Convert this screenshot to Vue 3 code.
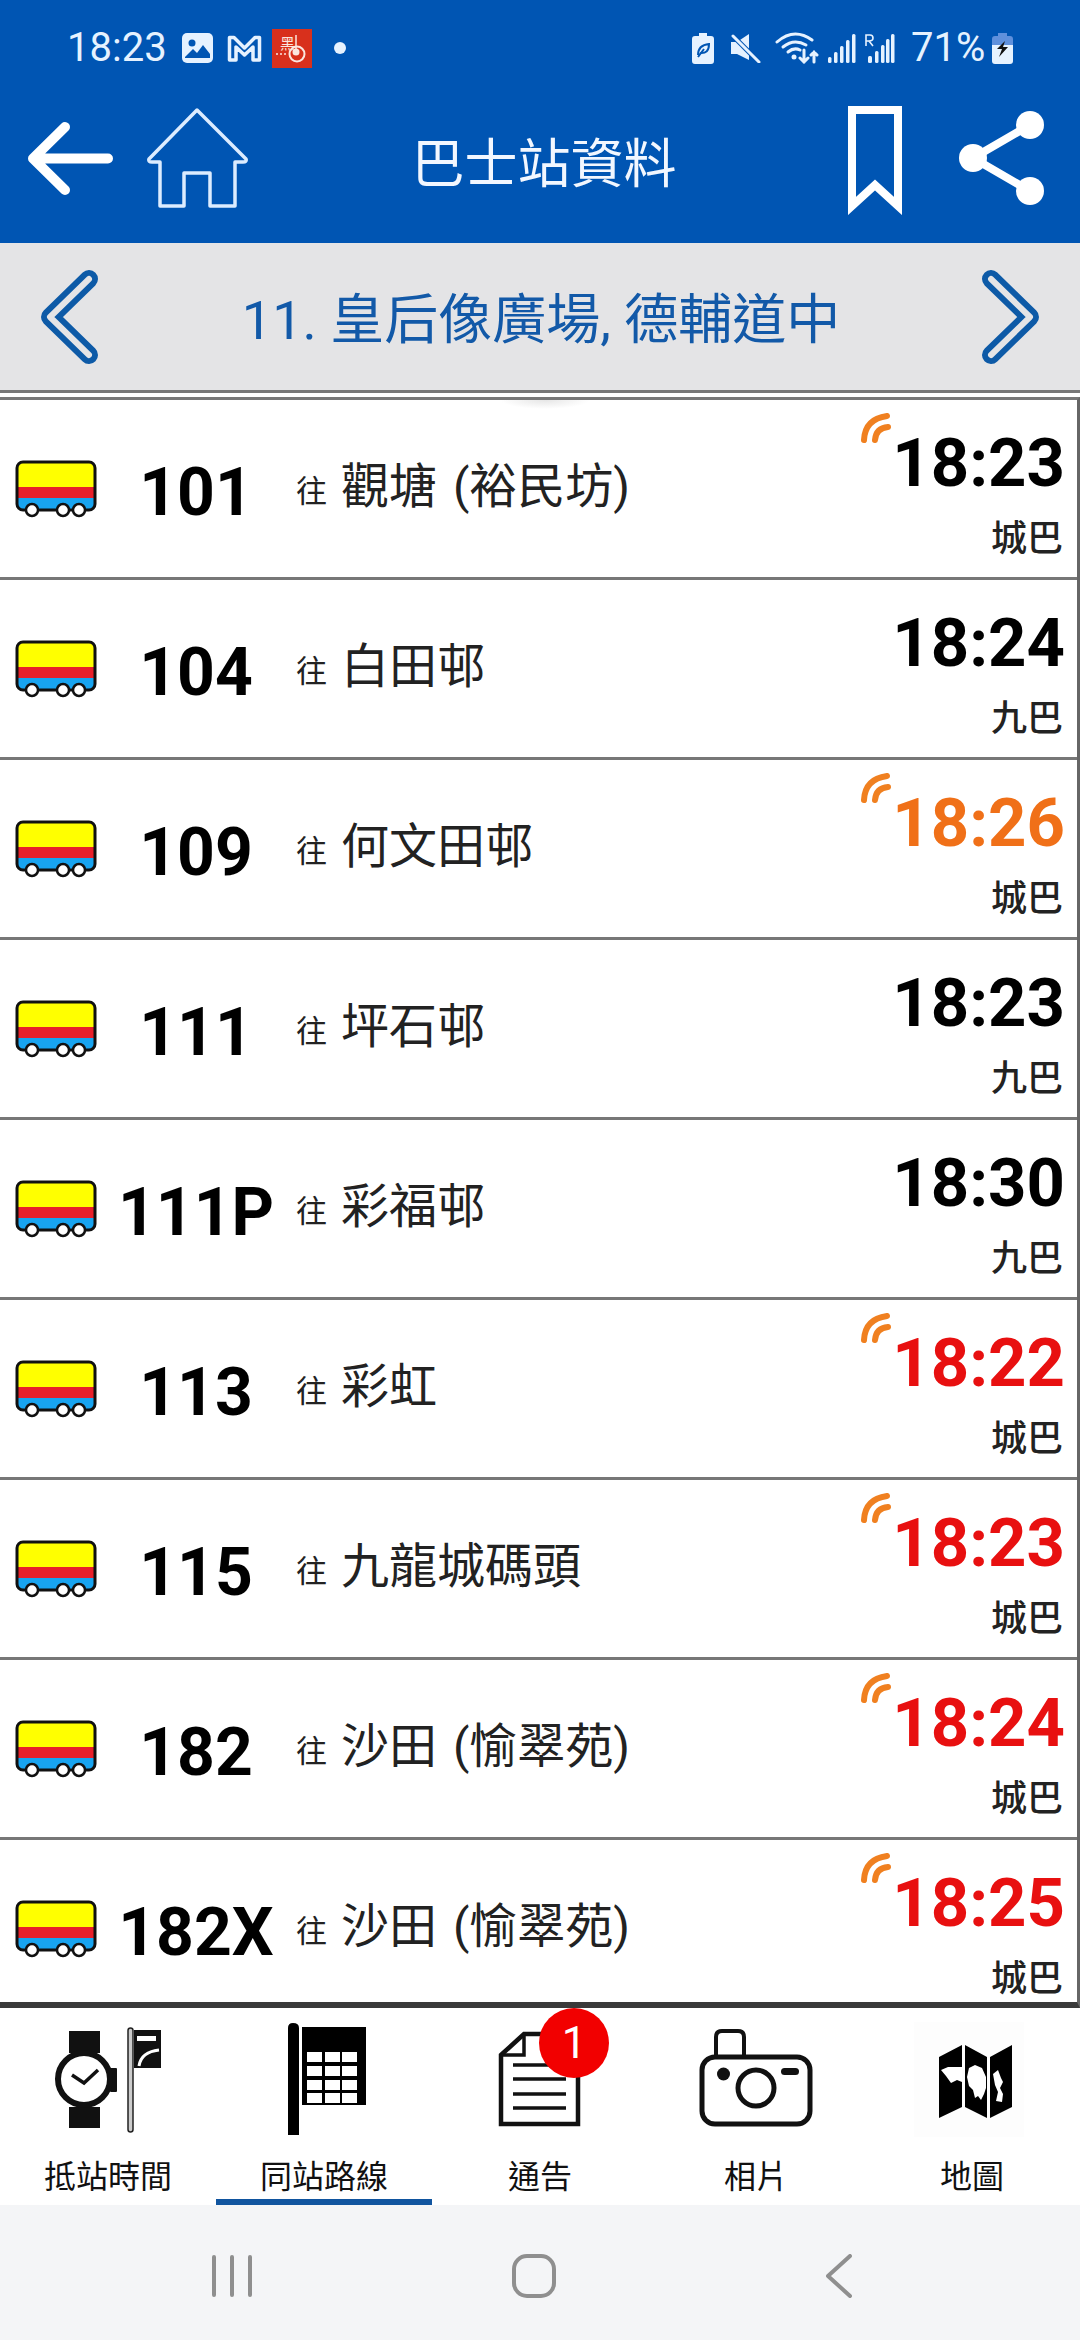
<script setup>
const routes = [
  { no: '101', dest: '觀塘 (裕民坊)', time: '18:23', op: '城巴', live: true, tone: '' },
  { no: '104', dest: '白田邨', time: '18:24', op: '九巴', live: false, tone: '' },
  { no: '109', dest: '何文田邨', time: '18:26', op: '城巴', live: true, tone: 'orange' },
  { no: '111', dest: '坪石邨', time: '18:23', op: '九巴', live: false, tone: '' },
  { no: '111P', dest: '彩福邨', time: '18:30', op: '九巴', live: false, tone: '' },
  { no: '113', dest: '彩虹', time: '18:22', op: '城巴', live: true, tone: 'red' },
  { no: '115', dest: '九龍城碼頭', time: '18:23', op: '城巴', live: true, tone: 'red' },
  { no: '182', dest: '沙田 (愉翠苑)', time: '18:24', op: '城巴', live: true, tone: 'red' },
  { no: '182X', dest: '沙田 (愉翠苑)', time: '18:25', op: '城巴', live: true, tone: 'red' },
];

const cellXs = [43, 61, 78];
const cellYs = [30, 44, 58, 71];
</script>

<template>
  <div class="screen">
    <header class="header">
      <div class="status">
        <span class="clock">18:23</span>
        <svg class="st-gallery" width="31" height="30" viewBox="0 0 31 30">
          <rect width="31" height="30" rx="5" fill="#e6f2ff" />
          <circle cx="10" cy="10" r="3.5" fill="#0055b3" />
          <path d="M3 24 L11 16 L15 20 L21 12 L28 21 V25 H3 Z" fill="#0055b3" />
        </svg>
        <svg class="st-mail" width="35" height="27" viewBox="0 0 35 27">
          <path d="M2.500 25 V2.500 H7 L17.500 13 L28 2.500 H32.500 V25 H26 V12 L17.500 20 L9 12 V25 Z" fill="none" stroke="#e6f2ff" stroke-width="3.500" stroke-linejoin="round" />
        </svg>
        <svg class="st-app" width="40" height="39" viewBox="0 0 40 39">
          <rect width="40" height="39" fill="#d8301c" />
          <text x="8" y="20" font-size="15" fill="#fbe6df" font-family="Noto Sans CJK TC">黑</text>
          <circle cx="25" cy="25" r="7.500" fill="none" stroke="#fbe6df" stroke-width="2" />
          <circle cx="24" cy="23" r="3.500" fill="#fbe6df" />
          <path d="M24 6 V20" stroke="#fbe6df" stroke-width="1.500" />
          <path d="M4 25 H14" stroke="#fbe6df" stroke-width="1.500" stroke-dasharray="2 2" />
        </svg>
        <span class="st-dot"></span>
        <span class="st-right">
          <svg width="22" height="31" viewBox="0 0 22 31">
            <path d="M7 0 H15 V3 H19 Q22 3 22 6 V28 Q22 31 19 31 H3 Q0 31 0 28 V6 Q0 3 3 3 H7 Z" fill="#e6f2ff" />
            <path d="M6 22 Q6 12 17 11 Q17 21 8 20 M6 24 L12 16" fill="none" stroke="#0055b3" stroke-width="2" />
          </svg>
          <svg class="st-mute" width="30" height="29" viewBox="0 0 30 29">
            <path d="M0 8 H6 L18 0 V26 L6 20 H0 Z" fill="#e6f2ff" />
            <path d="M2 2 L28 28" stroke="#0055b3" stroke-width="5" />
            <path d="M2 2 L28 28" stroke="#e6f2ff" stroke-width="3" stroke-linecap="round" />
          </svg>
          <svg class="st-wifi" width="44" height="32" viewBox="0 0 44 32">
            <g fill="none" stroke="#e6f2ff" stroke-width="3" stroke-linecap="round">
              <path d="M2 10 Q19 -5 37 8" />
              <path d="M8 15 Q19 6 31 13" />
              <path d="M13 20 Q19 15 25 18" />
              <path d="M29 18 V30 M25 26 L29 30 L33 26" />
              <path d="M39 30 V20 M36 23 L39 20 L42 23" />
            </g>
            <circle cx="19" cy="25" r="2.500" fill="#e6f2ff" />
          </svg>
          <svg class="st-signal" width="28" height="29" viewBox="0 0 28 29">
            <g fill="#e6f2ff">
              <rect x="0" y="23" width="3.500" height="6" rx="1.500" />
              <rect x="6" y="18" width="3.500" height="11" rx="1.500" />
              <rect x="12" y="12" width="3.500" height="17" rx="1.500" />
              <rect x="18" y="6" width="3.500" height="23" rx="1.500" />
              <rect x="24" y="0" width="3.500" height="29" rx="1.500" />
            </g>
          </svg>
          <svg class="st-signal-r" width="30" height="30" viewBox="0 0 30 30">
            <g fill="#e6f2ff">
              <rect x="3" y="23" width="4" height="7" rx="1.500" />
              <rect x="10" y="18" width="3.500" height="12" rx="1.500" />
              <rect x="16" y="12" width="3.500" height="18" rx="1.500" />
              <rect x="21" y="6" width="3.500" height="24" rx="1.500" />
              <rect x="26" y="1" width="3.500" height="29" rx="1.500" />
              <path d="M1 13 V2 H5 Q8 2 8 5 Q8 8 4 8 L8 13 M1 8 H4" fill="none" stroke="#e6f2ff" stroke-width="1.600" />
            </g>
          </svg>
          <span class="pct">71%</span>
          <svg class="st-batt" width="21" height="31" viewBox="0 0 21 31">
            <path d="M6 0 H15 V3 H18 Q21 3 21 6 V12 H0 V6 Q0 3 3 3 H6 Z" fill="#5f90dc" />
            <path d="M0 12 H21 V28 Q21 31 18 31 H3 Q0 31 0 28 Z" fill="#e6f2ff" />
            <path d="M13 8 L5 16 H10 L7 24 L16 14 H11 Z" fill="#111" />
          </svg>
        </span>
      </div>

      <div class="toolbar">
        <svg class="tb-back" width="85" height="73" viewBox="0 0 85 73">
          <path d="M80 36.500 H6 M37 5 L5 36.500 L37 68" fill="none" stroke="#fff" stroke-width="10" stroke-linecap="round" stroke-linejoin="round" />
        </svg>
        <svg class="tb-home" width="101" height="100" viewBox="0 0 101 100">
          <path d="M50 2 L99 51 Q100 54 96 54 H88 V98 H63 V65 H37 V98 H13 V54 H5 Q1 54 2 51 Z" fill="none" stroke="#dcecff" stroke-width="3.500" stroke-linejoin="round" />
        </svg>
        <h1 class="title">巴士站資料</h1>
        <svg class="tb-mark" width="54" height="109" viewBox="0 0 54 109">
          <path d="M4 4 H50 V100 L27 79 L4 100 Z" fill="none" stroke="#fff" stroke-width="8" />
        </svg>
        <svg class="tb-share" width="85" height="94" viewBox="0 0 85 94">
          <path d="M71 14 L14 47 L71 80" fill="none" stroke="#fff" stroke-width="8" />
          <circle cx="71" cy="14" r="14" fill="#fff" />
          <circle cx="14" cy="47" r="14" fill="#fff" />
          <circle cx="71" cy="80" r="14" fill="#fff" />
        </svg>
      </div>
    </header>

    <div class="stopbar">
      <svg class="chev" width="60" height="94" viewBox="0 0 60 94">
        <path class="chev-o" d="M48 9 L9 47 L48 85" />
        <path class="chev-i" d="M48 9 L9 47 L48 85" />
      </svg>
      <span class="stopname">11. 皇后像廣場, 德輔道中</span>
      <svg class="chev" width="60" height="94" viewBox="0 0 60 94">
        <path class="chev-o" d="M10 9 L49 47 L10 85" />
        <path class="chev-i" d="M10 9 L49 47 L10 85" />
      </svg>
    </div>

    <div class="gap"></div>

    <div class="list">
      <span class="glow"></span>
      <div v-for="r in routes" :key="r.no" class="row">
        <svg class="busicon" width="82" height="58" viewBox="0 0 82 58">
          <rect x="2" y="2" width="78" height="48" rx="6" fill="#ffff00" />
          <rect x="2" y="27" width="78" height="11" fill="#e8202a" />
          <path d="M2 38 H80 V44 Q80 50 74 50 H8 Q2 50 2 44 Z" fill="#18a4f0" />
          <rect x="2" y="2" width="78" height="48" rx="6" fill="none" stroke="#111" stroke-width="3" />
          <circle cx="17" cy="50" r="6" fill="#fff" stroke="#111" stroke-width="2.500" />
          <circle cx="48" cy="50" r="6" fill="#fff" stroke="#111" stroke-width="2.500" />
          <circle cx="64" cy="50" r="6" fill="#fff" stroke="#111" stroke-width="2.500" />
        </svg>
        <span class="routeno">{{ r.no }}</span>
        <span class="to">往</span>
        <span class="dest">{{ r.dest }}</span>
        <div class="eta">
          <svg v-if="r.live" class="live" width="30" height="30" viewBox="0 0 30 30">
            <path d="M3 27 Q4 6 26 3 M14 27 Q15 15 27 14" fill="none" stroke="#f08020" stroke-width="6" stroke-linecap="round" />
          </svg>
          <span class="time" :class="r.tone">{{ r.time }}</span>
          <span class="op">{{ r.op }}</span>
        </div>
      </div>
    </div>

    <nav class="tabs">
      <div class="tab">
        <svg width="120" height="120" viewBox="3 0 120 120">
          <rect x="24" y="9" width="31" height="22" fill="#111" />
          <rect x="24" y="85" width="31" height="21" fill="#111" />
          <rect x="65" y="46" width="7" height="24" rx="1" fill="#111" />
          <circle cx="39" cy="57" r="26" fill="#fff" stroke="#111" stroke-width="6" />
          <path d="M27 53 L39 61 L53 48" fill="none" stroke="#111" stroke-width="3.500" />
          <rect x="83" y="6" width="5" height="104" rx="2.500" fill="#ccc" stroke="#222" stroke-width="1.500" />
          <rect x="89" y="8" width="27" height="38" fill="#111" />
          <rect x="92" y="14" width="19" height="5" fill="#fff" />
          <path d="M94 44 Q96 30 114 28" fill="none" stroke="#fff" stroke-width="3" />
        </svg>
        <span class="tablabel">抵站時間</span>
      </div>
      <div class="tab active">
        <svg width="120" height="120" viewBox="0 0 120 120">
          <path d="M24 113 V6 Q24 1 29 1 Q35 1 35 6 V113 Z" fill="#000" />
          <rect x="38" y="5" width="64" height="78" fill="#000" />
          <template v-for="y in cellYs" :key="y">
            <rect v-for="x in cellXs" :key="x" :x="x" :y="y" width="15" :height="10" fill="#fff" />
          </template>
        </svg>
        <span class="tablabel">同站路線</span>
      </div>
      <div class="tab">
        <div class="iconwrap">
          <svg width="120" height="120" viewBox="0 0 120 120">
            <path d="M21 33 L44 12 H98 V102 H21 Z" fill="#fff" stroke="#111" stroke-width="4.500" />
            <path d="M44 12 V33 H21" fill="none" stroke="#111" stroke-width="3.500" />
            <path d="M33 43 H86 M33 57 H86 M33 72 H86 M33 86 H86" stroke="#111" stroke-width="3.500" />
          </svg>
          <span class="badge">1</span>
        </div>
        <span class="tablabel">通告</span>
      </div>
      <div class="tab">
        <svg width="120" height="120" viewBox="0 0 120 120">
          <rect x="6" y="35" width="108" height="67" rx="13" fill="none" stroke="#111" stroke-width="5" />
          <path d="M20 33 V15 Q20 9 26 9 H42 Q48 9 48 15 V33" fill="none" stroke="#111" stroke-width="4" />
          <circle cx="60" cy="66" r="18" fill="none" stroke="#111" stroke-width="5" />
          <circle cx="27.500" cy="52" r="6.500" fill="#111" />
          <rect x="85" y="46" width="18" height="7" rx="3.500" fill="#111" />
        </svg>
        <span class="tablabel">相片</span>
      </div>
      <div class="tab">
        <svg width="120" height="120" viewBox="0 0 120 120">
          <rect x="2" y="0" width="110" height="115" fill="#fdfdfd" />
          <path d="M27 35 L50 23 V85 L27 96 Z M53 23 L75 35 V96 L53 85 Z M78 35 L100 23 V85 L78 96 Z" fill="#000" />
          <path d="M29 48 L36 45 L50 45 V60 L45 58 L39 61 L34 54 Z" fill="#fff" />
          <path d="M57 46 L63 43 L70 46 L74 55 V66 L72 72 L69 78 L66 74 L63 76 L61 68 L57 64 L55 55 Z" fill="#fff" />
          <path d="M81 52 L86 48 L89 56 L91 60 L88 66 L91 72 L90 80 L84 79 L86 70 L83 63 Z" fill="#fff" />
        </svg>
        <span class="tablabel">地圖</span>
      </div>
    </nav>

    <div class="sysnav">
      <svg class="sys-recents" width="40" height="42" viewBox="0 0 40 42">
        <path d="M2 2 V40 M20 2 V40 M38 2 V40" stroke="#8f8f8f" stroke-width="4" stroke-linecap="round" />
      </svg>
      <svg class="sys-home" width="44" height="44" viewBox="0 0 44 44">
        <rect x="2" y="2" width="40" height="40" rx="13" fill="none" stroke="#8f8f8f" stroke-width="4" />
      </svg>
      <svg class="sys-back" width="26" height="44" viewBox="0 0 26 44">
        <path d="M24 2 L2 22 L24 42" fill="none" stroke="#8f8f8f" stroke-width="4" stroke-linecap="round" stroke-linejoin="round" />
      </svg>
    </div>
  </div>
</template>

<style>
html, body {
  margin: 0;
  background: #fff;
}
</style>

<style scoped>
.screen {
  width: 1080px;
  height: 2340px;
  display: flex;
  flex-direction: column;
  overflow: hidden;
  font-family: Roboto, "Noto Sans CJK TC", sans-serif;
  background: #fff;
}

.header {
  height: 243px;
  background: #0055b3;
  flex: none;
}

.status {
  height: 96px;
  display: flex;
  align-items: center;
  padding-left: 67px;
  padding-right: 67px;
  color: #e6f2ff;
  box-sizing: border-box;
}

.clock {
  font-size: 40px;
  line-height: 40px;
  width: 115px;
}

.st-mail {
  margin-left: 14px;
}

.st-app {
  margin-left: 10px;
}

.st-dot {
  width: 12px;
  height: 12px;
  border-radius: 50%;
  background: #e6f2ff;
  margin-left: 22px;
}

.st-right {
  margin-left: auto;
  display: flex;
  align-items: center;
}

.st-mute {
  margin-left: 17px;
}

.st-wifi {
  margin-left: 14px;
}

.st-signal {
  margin-left: 9px;
}

.st-signal-r {
  margin-left: 9px;
}

.pct {
  font-size: 40px;
  line-height: 40px;
  margin-left: 16px;
  width: 81px;
}

.toolbar {
  height: 147px;
  box-sizing: border-box;
  padding-bottom: 23px;
  padding-right: 36px;
  display: flex;
  align-items: center;
}

.tb-back {
  margin-left: 28px;
}

.tb-home {
  margin-left: 34px;
}

.title {
  flex: 1;
  margin: 13px 8px 0 0;
  font-size: 53px;
  line-height: 60px;
  font-weight: 400;
  text-align: center;
  color: #f2f7ff;
}

.tb-mark {
  margin-top: 5px;
  margin-right: 57px;
}

.stopbar {
  height: 147px;
  flex: none;
  background: #e4e4e6;
  display: flex;
  align-items: center;
  justify-content: space-between;
  padding: 0 39px 0 41px;
  box-sizing: border-box;
}

.chev-o,
.chev-i {
  fill: none;
  stroke-linecap: round;
  stroke-linejoin: round;
}

.chev-o {
  stroke: #0d5aa7;
  stroke-width: 18;
}

.chev-i {
  stroke: #e4e4e6;
  stroke-width: 6;
}

.stopname {
  font-size: 54px;
  line-height: 60px;
  color: #1259a8;
  margin-top: 9px;
}

.gap {
  height: 7px;
  flex: none;
  box-sizing: border-box;
  border-top: 3px solid #777;
  background: #fff;
}

.list {
  height: 1611px;
  flex: none;
  position: relative;
  overflow: hidden;
  box-sizing: border-box;
  border-top: 3px solid #777;
  border-right: 3px solid #666;
  border-bottom: 6px solid #3a3a3a;
}

.glow {
  position: absolute;
  left: 500px;
  top: 0;
  width: 90px;
  height: 9px;
  background: radial-gradient(ellipse at top, #e6e6e6, rgba(255, 255, 255, 0) 70%);
}

.row {
  height: 180px;
  box-sizing: border-box;
  border-bottom: 3px solid #777;
  display: flex;
  align-items: center;
  position: relative;
}

.busicon {
  margin-left: 15px;
  flex: none;
}

.routeno {
  width: 194px;
  margin-left: 2px;
  flex: none;
  text-align: center;
  font-size: 66px;
  line-height: 70px;
  font-weight: 700;
  color: #000;
  margin-top: 8px;
}

.to {
  font-size: 31px;
  line-height: 40px;
  margin-left: 3px;
  margin-top: 6px;
  color: #222;
}

.dest {
  font-size: 48px;
  line-height: 60px;
  margin-left: 14px;
  margin-top: -3px;
  word-spacing: 4px;
  color: #222;
}

.eta {
  margin-left: auto;
  padding-right: 12px;
  align-self: stretch;
  display: flex;
  flex-direction: column;
  align-items: flex-end;
  position: relative;
}

.live {
  position: absolute;
  left: -31px;
  top: 13px;
}

.time {
  font-size: 67px;
  line-height: 70px;
  font-weight: 700;
  color: #000;
  margin-top: 28px;
}

.time.orange {
  color: #f07018;
}

.time.red {
  color: #e81010;
}

.op {
  font-size: 36px;
  line-height: 44px;
  font-weight: 500;
  color: #222;
  margin-top: 19px;
  margin-right: 2px;
}

.tabs {
  height: 197px;
  flex: none;
  display: grid;
  grid-template-columns: repeat(5, 216px);
  background: #fff;
}

.tab {
  display: flex;
  flex-direction: column;
  align-items: center;
  padding-top: 14px;
  box-sizing: border-box;
}

.tab.active {
  border-bottom: 6px solid #11559f;
}

.iconwrap {
  position: relative;
  height: 120px;
}

.badge {
  position: absolute;
  left: 59px;
  top: -14px;
  width: 70px;
  height: 70px;
  border-radius: 50%;
  background: #f20000;
  color: #fff;
  font-size: 44px;
  line-height: 70px;
  text-align: center;
}

.tablabel {
  font-size: 32px;
  line-height: 36px;
  margin-top: 17px;
  color: #111;
}

.sysnav {
  flex: 1;
  background: #f4f5f7;
  display: flex;
  align-items: center;
  padding-left: 212px;
  padding-top: 7px;
}

.sys-home {
  margin-left: 260px;
}

.sys-back {
  margin-left: 270px;
}
</style>
